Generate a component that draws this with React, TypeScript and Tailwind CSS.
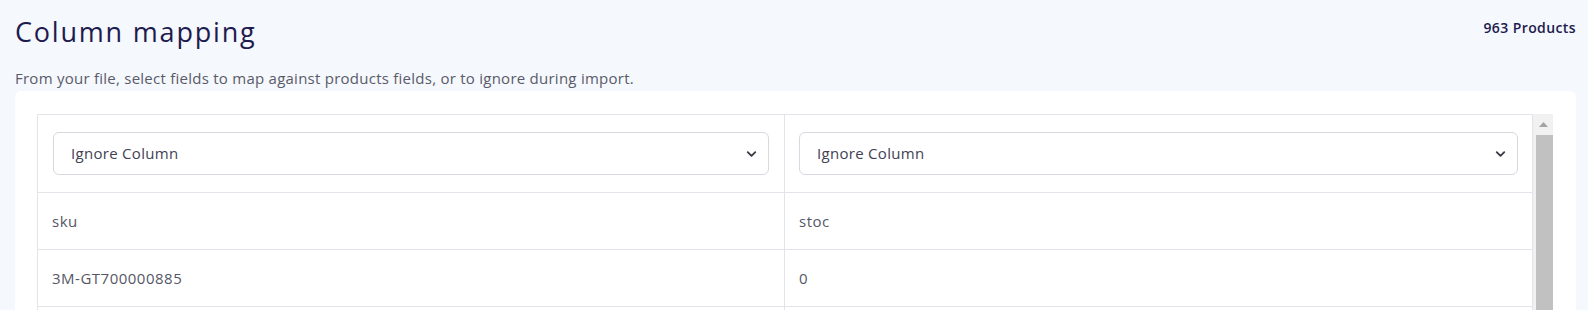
import { ChevronDown } from "lucide-react";

const rows = [
  ["sku", "stoc"],
  ["3M-GT700000885", "0"],
];

function ColumnSelect() {
  return (
    <div className="relative">
      <select
        defaultValue="ignore"
        className="w-full h-[43px] appearance-none rounded-[6px] border border-[#d7d9df] bg-white pl-[17px] pr-10 text-[15px] tracking-[0.3px] text-[#3f4254] outline-none"
      >
        <option value="ignore">Ignore Column</option>
        <option value="sku">SKU</option>
        <option value="stock">Stock</option>
      </select>
      <ChevronDown
        className="pointer-events-none absolute right-[10px] top-1/2 -translate-y-1/2 h-[15px] w-[15px] text-[#3a3d45]"
        strokeWidth={3}
      />
    </div>
  );
}

export default function App() {
  return (
    <div
      className="h-[310px] overflow-hidden bg-[#f5f8fc] pl-[15px] pr-[12px] pt-[14px]"
      style={{ fontFamily: '"Open Sans", "Liberation Sans", sans-serif' }}
    >
      <div className="flex items-start justify-between">
        <h1 className="text-[27px] leading-[36px] text-[#1e1b4f] tracking-[1.8px]">
          Column mapping
        </h1>
        <span className="mt-[5px] text-[14px] leading-[18px] font-semibold tracking-[0.4px] text-[#1e1b4f]">
          963 Products
        </span>
      </div>
      <p className="mt-[18px] text-[15px] leading-[20px] tracking-[0.25px] text-[#595b6a]">
        From your file, select fields to map against products fields, or to ignore during import.
      </p>

      {/* Mapping table */}
      <div className="mt-[3px] rounded-t-[6px] bg-white pl-[22px] pr-[23px] pt-[23px] pb-6">
        <div className="flex h-[260px] overflow-hidden">
          <div className="flex-1 border-l border-t border-r border-[#e3e4e9]">
            <div className="grid grid-cols-2 border-b border-[#e3e4e9]">
              <div className="px-[15px] py-[17px] border-r border-[#e3e4e9]">
                <ColumnSelect />
              </div>
              <div className="px-[14px] py-[17px]">
                <ColumnSelect />
              </div>
            </div>
            {rows.map((row, i) => (
              <div key={i} className="grid grid-cols-2 border-b border-[#e3e4e9]">
                {row.map((cell, j) => (
                  <div
                    key={j}
                    className={`h-[56px] flex items-center px-[14px] text-[15px] tracking-[0.5px] text-[#555766] ${
                      j === 0 ? "border-r border-[#e3e4e9]" : ""
                    }`}
                  >
                    {cell}
                  </div>
                ))}
              </div>
            ))}
            <div className="grid grid-cols-2 h-full">
              <div className="border-r border-[#e3e4e9]" />
              <div />
            </div>
          </div>
          {/* scrollbar */}
          <div className="w-[20px] bg-[#f1f1f1] flex flex-col items-center">
            <div className="h-[21px] flex items-center justify-center">
              <svg width="9" height="5" viewBox="0 0 9 5">
                <path d="M0 5 L4.5 0 L9 5 Z" fill="#a3a3a3" />
              </svg>
            </div>
            <div className="w-[17px] ml-[2px] flex-1 bg-[#c1c1c1]" />
          </div>
        </div>
      </div>
    </div>
  );
}
